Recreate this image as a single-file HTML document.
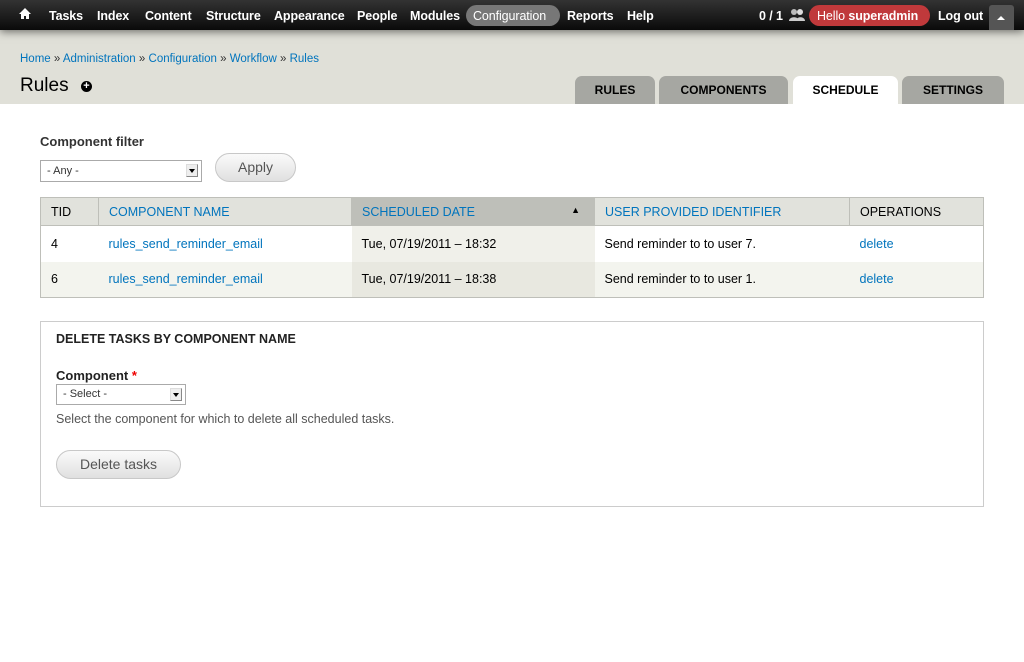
<!DOCTYPE html>
<html><head><meta charset="utf-8"><style>
*{margin:0;padding:0;box-sizing:border-box}
body{width:1024px;height:662px;background:#fff;font-family:"Liberation Sans",sans-serif;font-size:13px;color:#333;position:relative;overflow:hidden}
.tb{position:absolute;left:0;top:0;width:1024px;height:30px;background:linear-gradient(#333,#0a0a0a);box-shadow:0 2px 8px rgba(0,0,0,.5);z-index:2}
.tb span{position:absolute;top:9px;color:#fff;font-size:12.5px;font-weight:bold;letter-spacing:-.1px}
.hdr{position:absolute;left:0;top:30px;width:1024px;height:74px;background:#e0e0d8}
a,.lk{color:#0074bd;text-decoration:none}
.tab{position:absolute;top:76px;height:28px;background:#a6a7a2;border-radius:7px 7px 0 0;font-weight:bold;font-size:12px;color:#000;text-align:center;line-height:29px}
.abs{position:absolute}
table{position:absolute;left:40px;top:197px;width:944px;border-collapse:collapse;border:1px solid #bebfb9}
td,th{font-size:12.5px;text-align:left;font-weight:normal;padding:0 10px;color:#000}
th{height:28px;background:#e1e2dc;border-right:1px solid #bebfb9;border-bottom:1px solid #bebfb9}
td{height:36px}
.sel{position:absolute;border:1px solid #aaa;background:#fff;font-size:11px;color:#333;padding-left:6px}
.sel i{position:absolute;right:3px;top:3px;width:12px;height:13px;background:#eee;border:1px solid #888;border-top-color:#ddd;border-left-color:#ddd}
.sel i:after{content:"";position:absolute;left:2px;top:4px;border:3px solid transparent;border-top:4px solid #000}
.btn{position:absolute;border:1px solid #c8c8c8;border-radius:15px;background:linear-gradient(#fafafa,#e0e0e0);font-size:14px;color:#555;text-align:center}
</style></head><body>
<div class="tb">
<svg class="abs" style="left:19px;top:8px" width="12" height="12" viewBox="0 0 12 12"><path d="M6 0L0 6h2v5h3V8h2v3h3V6h2z" fill="#fff"/></svg>
<span style="left:49px">Tasks</span><span style="left:97px">Index</span><span style="left:145px">Content</span><span style="left:206px">Structure</span><span style="left:274px">Appearance</span><span style="left:357px">People</span><span style="left:410px">Modules</span>
<div class="abs" style="left:466px;top:5px;width:94px;height:21px;border-radius:11px;background:#777"></div>
<span style="left:473px;font-weight:normal">Configuration</span><span style="left:567px">Reports</span><span style="left:627px">Help</span>
<span style="left:759px">0 / 1</span>
<svg class="abs" style="left:789px;top:8px" width="16" height="14" viewBox="0 0 16 14"><circle cx="5" cy="4" r="3" fill="#bbb"/><circle cx="11" cy="4" r="3" fill="#ddd"/><path d="M0 13c0-5 10-5 10 0zM7 13c0-5 9-5 9 0z" fill="#ccc"/></svg>
<div class="abs" style="left:809px;top:5px;width:121px;height:21px;border-radius:11px;background:#c0393b"></div>
<span style="left:817px;font-weight:normal">Hello <b>superadmin</b></span>
<span style="left:938px">Log out</span>
<div class="abs" style="left:989px;top:5px;width:25px;height:25px;background:#555;border-radius:3px 3px 0 0"></div>
<div class="abs" style="left:997px;top:16px;border:4px solid transparent;border-bottom:4px solid #fff;border-top:0"></div>
</div>
<div class="hdr"></div>
<div class="abs" style="left:20px;top:53px;font-size:11.5px"><a>Home</a> » <a>Administration</a> » <a>Configuration</a> » <a>Workflow</a> » <a>Rules</a></div>
<div class="abs" style="left:20px;top:75px;font-size:19px;color:#000">Rules</div>
<div class="abs" style="left:81px;top:81px;width:11px;height:11px;border-radius:50%;background:#000;color:#fff;font-size:11px;line-height:10px;text-align:center;font-weight:bold">+</div>
<div class="tab" style="left:575px;width:80px">RULES</div>
<div class="tab" style="left:659px;width:129px">COMPONENTS</div>
<div class="tab" style="left:793px;width:105px;background:#fff">SCHEDULE</div>
<div class="tab" style="left:902px;width:102px">SETTINGS</div>
<div class="abs" style="left:40px;top:134px;font-weight:bold;font-size:13px">Component filter</div>
<div class="sel" style="left:40px;top:160px;width:162px;height:22px;line-height:20px">- Any -<i></i></div>
<div class="btn" style="left:215px;top:153px;width:81px;height:29px;line-height:27px">Apply</div>
<table>
<tr><th style="width:58px">TID</th><th style="width:253px" class="lk"><span class="lk">COMPONENT NAME</span></th><th style="width:243px;background:#bebfb9"><span class="lk">SCHEDULED DATE</span><span style="float:right;margin-right:4px;font-size:9px">▲</span></th><th style="width:255px"><span class="lk">USER PROVIDED IDENTIFIER</span></th><th style="border-right:0">OPERATIONS</th></tr>
<tr><td>4</td><td><a>rules_send_reminder_email</a></td><td style="background:#f0f0ea">Tue, 07/19/2011 – 18:32</td><td>Send reminder to to user 7.</td><td><a>delete</a></td></tr>
<tr style="background:#f3f4ee"><td>6</td><td><a>rules_send_reminder_email</a></td><td style="background:#e8e8e0">Tue, 07/19/2011 – 18:38</td><td>Send reminder to to user 1.</td><td><a>delete</a></td></tr>
</table>
<div class="abs" style="left:40px;top:321px;width:944px;height:186px;border:1px solid #ccc"></div>
<div class="abs" style="left:56px;top:332px;font-weight:bold;font-size:12.5px;color:#222">DELETE TASKS BY COMPONENT NAME</div>
<div class="abs" style="left:56px;top:368px;font-weight:bold;font-size:13px;color:#222">Component <span style="color:#e00">*</span></div>
<div class="sel" style="left:56px;top:384px;width:130px;height:21px;line-height:19px">- Select -<i></i></div>
<div class="abs" style="left:56px;top:412px;font-size:12.5px;color:#555">Select the component for which to delete all scheduled tasks.</div>
<div class="btn" style="left:56px;top:450px;width:125px;height:29px;line-height:27px">Delete tasks</div>
</body></html>
